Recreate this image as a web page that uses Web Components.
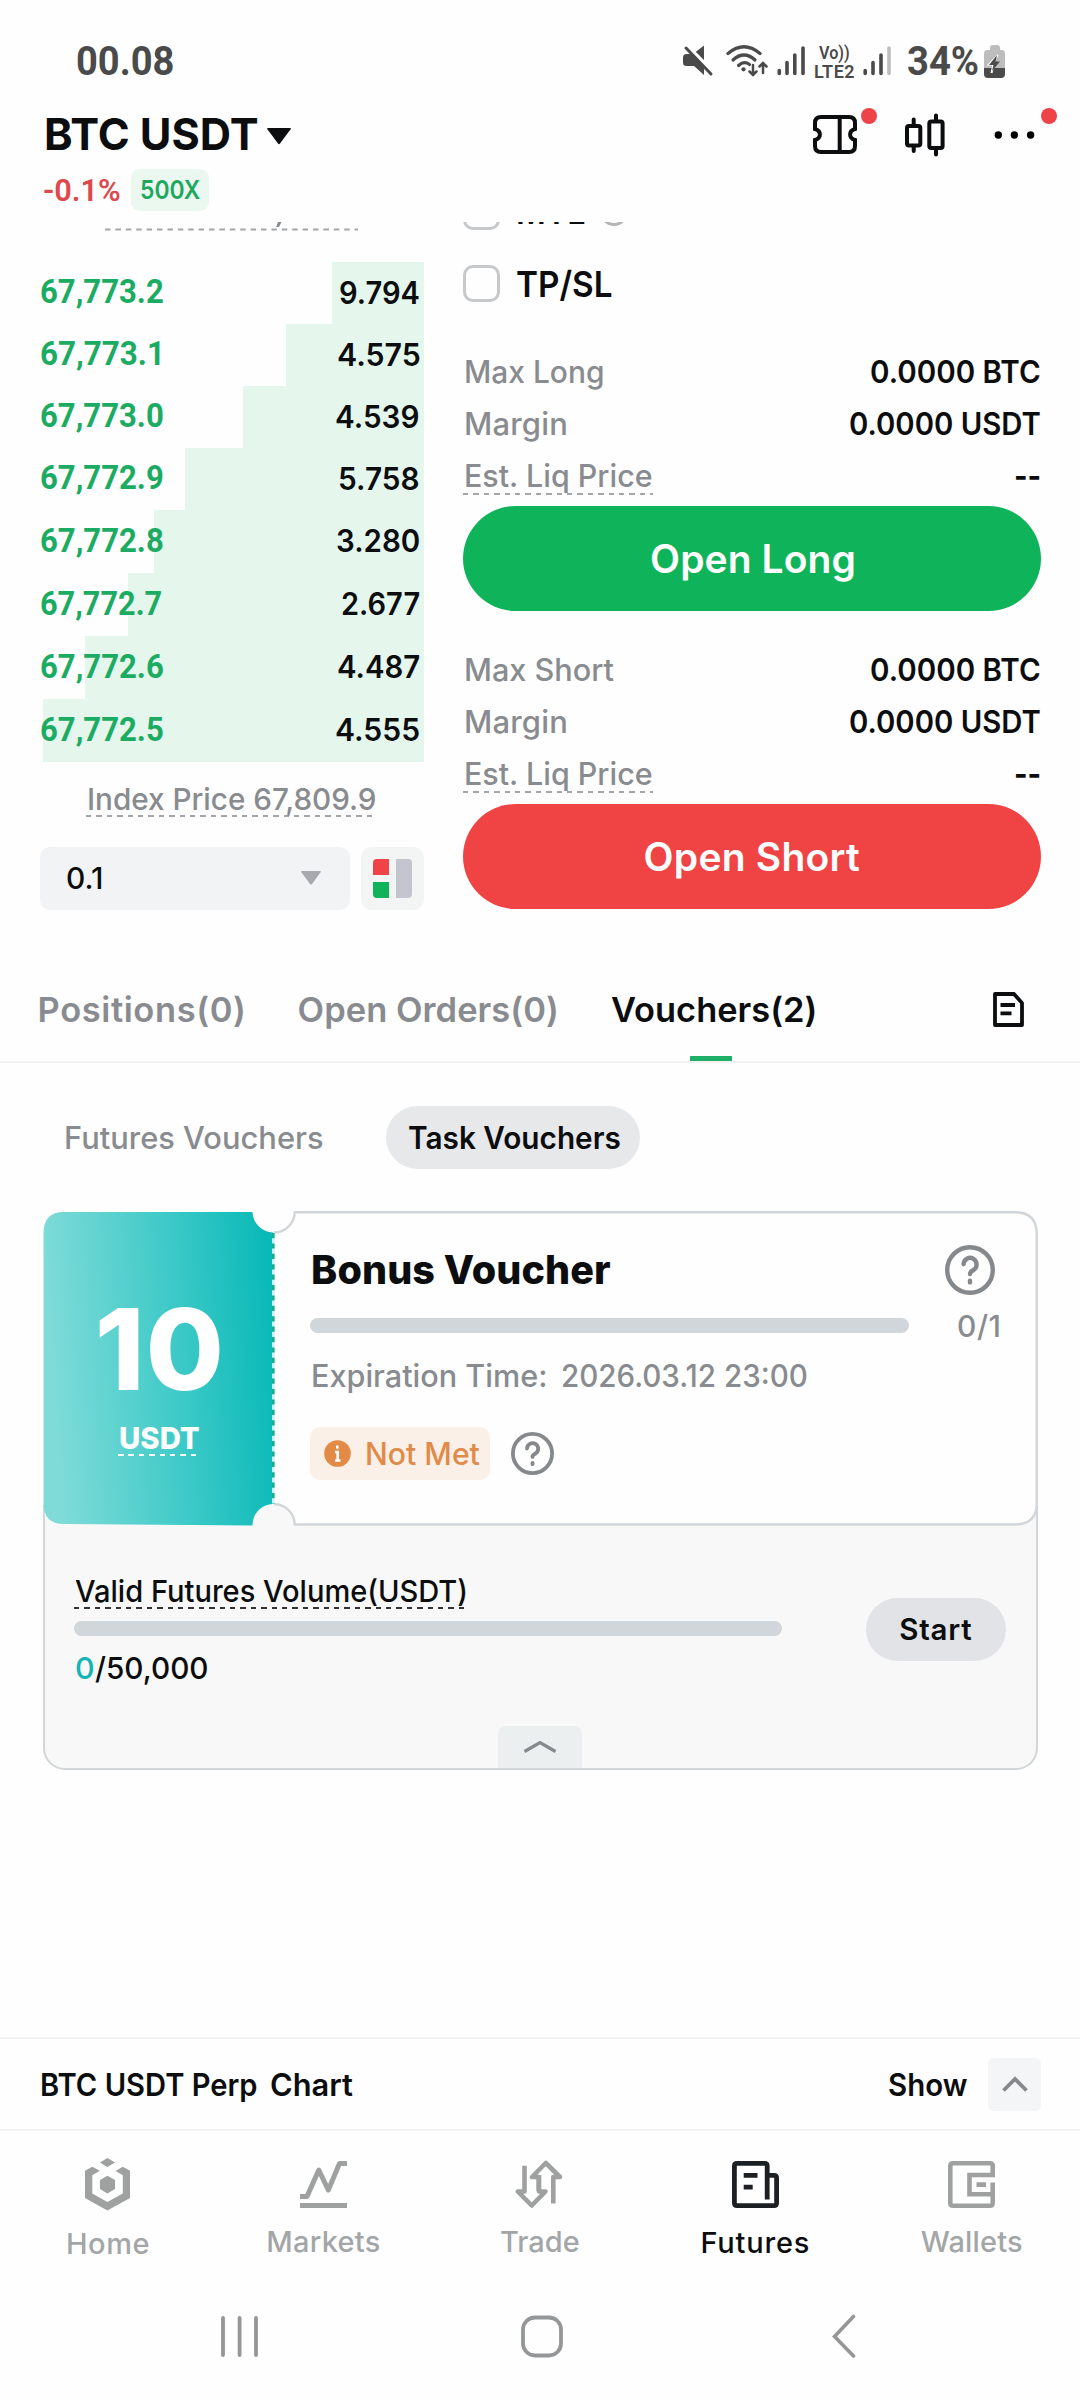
<!DOCTYPE html>
<html lang="en">
<head>
<meta charset="utf-8">
<title>BTC USDT Futures</title>
<style>
  html, body { margin: 0; padding: 0; background: #fefefe; }
  body { width: 1080px; height: 2400px; overflow: hidden; font-family: Inter, "Liberation Sans", sans-serif; color: #0b0d0f; }
</style>
</head>
<body>
<futures-page></futures-page>
<script>
const GREY = '#888b8f';
const define = (name, css, html) => customElements.define(name, class extends HTMLElement {
  constructor() {
    super();
    this.attachShadow({ mode: 'open' }).innerHTML =
      `<style>:host{display:block;box-sizing:border-box}*{box-sizing:border-box}svg{display:block;flex:none}.row{display:flex;align-items:center}${css}</style>${html}`;
  }
});

/* One line of text whose visible glyphs span exactly `w` pixels:
   loose text gets letter spacing, tight text is condensed. */
const pen = document.createElement('canvas').getContext('2d');
customElements.define('fit-text', class extends HTMLElement {
  connectedCallback() {
    const w = +this.getAttribute('w'), s = +this.getAttribute('s'), b = this.getAttribute('b') || '500';
    const f = this.getAttribute('f') || 'Inter', text = this.textContent;
    pen.font = `${b} ${s}px ${f}`;
    const m = pen.measureText(text);
    const ink = m.actualBoundingBoxLeft + m.actualBoundingBoxRight, goal = w - .6;
    let ls = 0, sx = 1;
    if (goal >= ink) ls = text.length > 1 ? (goal - ink) / (text.length - 1) : 0; else sx = goal / ink;
    const c = this.getAttribute('c'), lh = Math.round(s * 1.2);
    if (!this.shadowRoot) this.attachShadow({ mode: 'open' });
    this.shadowRoot.innerHTML = `<style>
      :host{display:block;flex:none;width:${w}px;height:${lh}px;font:${b} ${s}px/${lh}px ${f},"Liberation Sans",sans-serif;white-space:pre;${c ? `color:${c};` : ''}}
      span{display:block;width:max-content;margin-left:${m.actualBoundingBoxLeft * sx + .6}px;letter-spacing:${ls}px;transform:scaleX(${sx});transform-origin:0 50%}
    </style><span><slot></slot></span>`;
  }
});

/* Dashed underline below slotted text. */
define('dash-under', `:host{flex:none;--d:#a3a6a9;padding:0 2px;display:flex;align-items:center;
  background:repeating-linear-gradient(90deg,var(--d) 0 5.5px,transparent 5.5px 10.4px) left bottom/100% 2px no-repeat}`, `<slot></slot>`);

define('help-icon', `:host{flex:none;width:50px;height:50px}svg{width:100%;height:100%}`,
 `<svg viewBox="0 0 50 50" fill="none" stroke="#86898c" stroke-width="4.4" stroke-linecap="round"><circle cx="25" cy="25" r="22.8"/><path d="M18.6 19.2a6.5 6.5 0 1 1 9.8 5.8c-2.5 1.4-3.4 2-3.4 4"/><path d="M25 35.8v1.6"/></svg>`);

define('status-bar', `:host{height:95px;padding:24px 75px 0 76.5px;color:#4a4a4a}.row{height:71px}.sp{flex:1}.net{display:flex;flex-direction:column;margin:2px 9px 0 8px}.net fit-text{margin-bottom:-3.500px}`,
`<div class="row">
 <fit-text w="96.7" s="41" b="700" f="Roboto" style="margin-top:3px">00.08</fit-text><div class="sp"></div>
 <svg width="124" height="34" viewBox="682 43 124 34" fill="none" stroke="#4a4a4a" stroke-linecap="round">
  <path d="M683 57.500q0-3.500 3.500-3.500H693l11-8.500V75l-10-9h-7.500q-3.500 0-3.500-3.500z" fill="#4a4a4a" stroke="none"/>
  <path d="M687 46l26 26" stroke="#fefefe" stroke-width="4" stroke-linecap="butt"/><path d="M686 48l25 26" stroke-width="3"/>
  <g stroke-width="3.200"><path d="M728 53.500Q744 40 760 53.500"/><path d="M733 60Q744 50 755 60"/><path d="M738.500 65.500Q744 60.500 749.500 64.500"/></g>
  <circle cx="743.500" cy="69.300" r="2.100" fill="#4a4a4a" stroke="none"/>
  <path d="M753 65v10m-3.500-3.500L753 75l3.500-3.500M763 73V63m-3.500 3.500L763 63l3.500 3.500" stroke-width="2.500"/>
  <path d="M779.300 73.500v-3M787 73.500V62.500M794.800 73.500V55M803 73.500V48" stroke-width="3.600"/>
 </svg>
 <div class="net"><fit-text w="31" s="18" b="600" f="Roboto" style="margin-left:4px">Vo))</fit-text><fit-text w="40" s="18" b="600" f="Roboto">LTE2</fit-text></div>
 <svg width="28" height="34" viewBox="863 43 28 34" fill="none" stroke="#4a4a4a" stroke-width="3.600" stroke-linecap="round"><path d="M865.200 73.500v-3M873 73.500V62.500M881 73.500V55"/><path d="M889 73.500V48" stroke="#bdbdbd"/></svg>
 <fit-text w="70.500" s="41" b="700" f="Roboto" style="margin:3px 0 0 16.500px">34%</fit-text>
 <svg width="21" height="34" viewBox="984 43 21 34" style="margin:2px 0 0 5.700px"><path d="M990 47q0-3 3-3h4q3 0 3 3v2h2q3 0 3 4v14h-21V53q0-4 3-4h3z" fill="#bdbdbd"/><path d="M984 67h21v6q0 4-4 4h-13q-4 0-4-4z" fill="#4a4a4a"/><path d="M998 54l-9 9.500h4.500L991.500 72" stroke="#fefefe" stroke-width="2" fill="none"/><path d="M997 54l-8 10h4.500L992 70l8-9.500h-4.500z" fill="#4a4a4a"/></svg>
</div>`);

define('market-header', `:host{height:127px;padding:0 29px 0 45.8px}.top{height:79px}.sp{flex:1}.sub{height:32px;margin-left:-2.800px}.lev{margin-left:11.500px;width:78px;height:42px;border-radius:9px;background:#eaf8f0;display:flex;align-items:center;justify-content:center}
.dot{position:relative}.dot::after{content:"";position:absolute;width:16px;height:16px;border-radius:50%;background:#ee4347;top:-7px;right:-20.500px}.more.dot::after{top:-4.500px;right:-6.500px}`,
`<div class="row top">
 <fit-text w="212.500" s="44.500" b="750">BTC USDT</fit-text>
 <svg width="24" height="17" viewBox="0 0 24 17" style="margin:3px 0 0 9px"><path d="M1 0h22q1.500 0 .6 1.300L13 15.500q-1 1.300-2 0L.4 1.300Q-.5 0 1 0z" fill="#0b0d0f"/></svg>
 <div class="sp"></div>
 <div class="dot"><svg width="44" height="39" viewBox="0 0 44 39" fill="none" stroke="#0b0d0f" stroke-width="4"><path d="M8 2H36Q42 2 42 8V14C35.500 16 35.500 23 42 25V31Q42 37 36 37H8Q2 37 2 31V25C8.500 23 8.500 16 2 14V8Q2 2 8 2ZM26.700 2V37"/></svg></div>
 <svg width="40" height="44" viewBox="0 0 40 44" fill="none" stroke="#0b0d0f" stroke-width="4" stroke-linecap="round" style="margin:0 0 0 48px"><rect x="2" y="13" width="13.300" height="19.500" rx="2"/><rect x="24.300" y="8.500" width="13.300" height="26.500" rx="2"/><path d="M8.700 6.500V12M8.700 33v5M31 2.500V8M31 35.500V41.500"/></svg>
 <div class="dot more" style="margin-left:49.500px;margin-right:1px"><svg width="56" height="44" viewBox="994 112.500 56 44"><circle cx="998.300" cy="134.500" r="3.700"/><circle cx="1014.400" cy="134.500" r="3.700"/><circle cx="1030.600" cy="134.500" r="3.700"/></svg></div>
</div>
<div class="row sub"><fit-text w="76.500" s="31" b="600" f="Roboto" c="#dc4a4e">-0.1%</fit-text><div class="lev"><fit-text w="60" s="26.300" b="600" c="#1fa75f">500X</fit-text></div></div>`);

customElements.define('order-book', class extends HTMLElement {
  constructor() {
    super();
    const rows = [['67,773.2', 122.5, '9.794', 80, 92], ['67,773.1', 119, '4.575', 82, 138.5], ['67,773.0', 122.5, '4.539', 83.3, 181], ['67,772.9', 122.5, '5.758', 79.5, 239],
      ['67,772.8', 122.5, '3.280', 82.5, 270], ['67,772.7', 121, '2.677', 78, 296], ['67,772.6', 122.5, '4.487', 82, 339.3], ['67,772.5', 122.5, '4.555', 83.3, 381]];
    this.attachShadow({ mode: 'open' }).innerHTML = `<style>
      :host{display:block;width:384px}*{box-sizing:border-box}svg{display:block}
      .cut{height:40px}
      .lv{display:flex;align-items:center;justify-content:space-between;height:62px;padding:0 5px 2px .5px;background:linear-gradient(#e5f6ec,#e5f6ec) right/var(--w) 100% no-repeat}
      .lv:nth-child(n+7){height:63px}
      .idx{display:flex;justify-content:center;height:85px;padding:18px 1px 0 0}
      dash-under{height:37px}
      .ctl{display:flex;justify-content:space-between}
      .sel{width:310px;height:63px;border-radius:10px;background:#f2f3f5;display:flex;align-items:center;justify-content:space-between;padding:0 29px 1px 26.5px}
      .view{width:63px;height:63px;border-radius:11px;background:#f3f4f4;display:grid;place-items:center}
    </style>
    <svg class="cut" width="384" height="40" viewBox="0 0 384 40"><path d="M238 0H241.500L239 5H236.200z" fill="#888b8f"/><path d="M65 7.500H318" stroke="#a3a6a9" stroke-width="2" stroke-dasharray="5.500 4.900"/></svg>
    ${rows.map(r => `<div class="lv" style="--w:${r[4]}px"><fit-text w="${r[1]}" s="33" b="700" f="Roboto" c="#1cab62">${r[0]}</fit-text><fit-text w="${r[3]}" s="31" b="600">${r[2]}</fit-text></div>`).join('')}
    <div class="idx"><dash-under><fit-text w="287" s="30.500" b="550" c="${GREY}">Index Price 67,809.9</fit-text></dash-under></div>
    <div class="ctl"><div class="sel"><fit-text w="35.500" s="30" b="500">0.1</fit-text><svg width="20" height="14" viewBox="0 0 20 14"><path d="M1 0h18q1.500 0 .6 1.300L11 13q-1 1-2 0L.4 1.300Q-.5 0 1 0z" fill="#a6a9ae"/></svg></div>
    <div class="view"><svg width="39" height="39" viewBox="0 0 39 39"><path d="M4 0H16V16H0V4Q0 0 4 0z" fill="#ef4347"/><path d="M0 23H16V39H4Q0 39 0 35z" fill="#10b35a"/><path d="M23 0h12q4 0 4 4v31q0 4-4 4H23z" fill="#c3c6cf"/></svg></div></div>`;
  }
});

define('check-row', `:host{display:flex;align-items:center;height:37px}i{width:37px;height:37px;border:3.200px solid #c6c8ca;border-radius:10px;margin-right:16px;flex:none}`, `<i></i><slot></slot>`);
define('stat-row', `:host{display:flex;align-items:center;justify-content:space-between;height:52px;padding:0 1px 1px 0}::slotted(fit-text:first-child){margin-left:2.300px}::slotted(dash-under){height:39px}`, `<slot></slot>`);
define('pill-button', `:host{display:flex;align-items:center;justify-content:center;color:#fff;border-radius:60px}`, `<slot></slot>`);

define('order-form', `:host{width:578px}check-row:first-of-type{margin:-29px 0 35px}.g{padding-top:44px}.g2{padding-top:33px}pill-button{height:105px;margin-top:4px}svg{margin-left:15px}`,
`<check-row><fit-text w="67" s="36" b="600" style="margin-left:1.500px">MTL</fit-text><svg width="28" height="28" viewBox="0 0 28 28"><circle cx="14" cy="14" r="12.500" fill="none" stroke="#b3b5b7" stroke-width="3"/></svg></check-row>
<check-row><fit-text w="95" s="36" b="600" style="margin-top:2px">TP/SL</fit-text></check-row>
<div class="g"><stat-row><fit-text w="137" s="31" b="550" c="${GREY}">Max Long</fit-text><fit-text w="169.500" s="31" b="600">0.0000 BTC</fit-text></stat-row>
<stat-row><fit-text w="101" s="31" b="550" c="${GREY}">Margin</fit-text><fit-text w="191" s="31" b="600">0.0000 USDT</fit-text></stat-row>
<stat-row><dash-under><fit-text w="186.300" s="31" b="550" c="${GREY}">Est. Liq Price</fit-text></dash-under><fit-text w="24.500" s="31" b="700">--</fit-text></stat-row>
<pill-button style="background:#0fb45a"><fit-text w="203" s="39" b="600">Open Long</fit-text></pill-button></div>
<div class="g2"><stat-row><fit-text w="148" s="31" b="550" c="${GREY}">Max Short</fit-text><fit-text w="169.500" s="31" b="600">0.0000 BTC</fit-text></stat-row>
<stat-row><fit-text w="101" s="31" b="550" c="${GREY}">Margin</fit-text><fit-text w="191" s="31" b="600">0.0000 USDT</fit-text></stat-row>
<stat-row><dash-under><fit-text w="186.300" s="31" b="550" c="${GREY}">Est. Liq Price</fit-text></dash-under><fit-text w="24.500" s="31" b="700">--</fit-text></stat-row>
<pill-button style="background:#f04444"><fit-text w="216" s="39" b="600">Open Short</fit-text></pill-button></div>`);

define('trade-panel', `:host{display:flex;justify-content:space-between;height:730px;padding:0 39px 0 40px;overflow:hidden}`, `<order-book></order-book><order-form></order-form>`);

define('position-tabs', `:host{display:flex;align-items:center;height:111px;padding:5px 56px 0 39px;border-bottom:2px solid #f0f1f1;color:${GREY}}.on{position:relative;color:#0b0d0f;margin:0 auto 0 54px}.on::after{content:"";position:absolute;left:80px;width:42px;height:5px;top:67px;background:#1eae68}`,
`<fit-text w="204" s="34.500" b="600">Positions(0)</fit-text><fit-text w="258" s="34.500" b="600" style="margin-left:55px">Open Orders(0)</fit-text><div class="on"><fit-text w="204" s="34.500" b="600">Vouchers(2)</fit-text></div>
<svg width="31" height="35" viewBox="0 0 31 35" fill="none" stroke="#0b0d0f" stroke-width="3.800" stroke-linejoin="round"><path d="M2 2H21L29 11V33H2Z"/><path d="M7.500 13H22M7.500 21.300H18.500"/></svg>`);

define('voucher-filter', `:host{display:flex;align-items:center;height:63px;margin-top:43px;padding-left:65.400px}.on{width:254.500px;height:63px;margin-left:62.900px;border-radius:32px;background:#e7e8ea;display:flex;align-items:center;justify-content:center}`,
`<fit-text w="257.500" s="31" b="550" c="${GREY}">Futures Vouchers</fit-text><div class="on"><fit-text w="211.500" s="31" b="600" style="margin-left:2px">Task Vouchers</fit-text></div>`);

define('progress-track', `:host{height:15px;border-radius:8px;background:#d0d6d9;flex:none}`, ``);

define('voucher-ticket', `:host{position:relative;display:flex;height:315px}.bg{position:absolute;left:0;top:0}
.amt{position:relative;width:230px;padding-top:70px;display:flex;flex-direction:column;align-items:center;color:#fff}.amt dash-under{--d:#fff;height:36px;padding:0 0 0 1px;margin-left:2px}
.info{position:relative;flex:1;padding:0 38px 0 37.500px}.t{height:87px;padding:30px 5px 0 2.500px;justify-content:space-between}.t fit-text{margin-top:1px}.b{height:15px;margin-top:20px;justify-content:space-between}.e{height:37px;margin-top:24px;padding-left:2.300px;gap:17.500px}.s{margin-top:33px}
.tag{width:180px;height:53px;border-radius:10px;background:#fbf0e8;display:flex;align-items:center;padding:0 0 1px 13.500px;gap:16px;margin-right:21px}help-icon.sm{width:43px;height:43px}`,
`<svg class="bg" width="995" height="316" viewBox="0 0 995 316"><defs><linearGradient id="g" x1="0" y1=".1" x2="1" y2="0"><stop offset="0" stop-color="#7edbd8"/><stop offset=".55" stop-color="#3cc9c7"/><stop offset="1" stop-color="#05b8b6"/></linearGradient></defs>
<path d="M231 21.500A21 21 0 0 0 251.800 1.200H973Q993.500 1.200 993.500 22V292Q993.500 313.500 973 313.500H251.800A21 21 0 0 0 231 293z" fill="#fefefe"/>
<path d="M21 1H209.500A21 21 0 0 0 230 21.500V293A21 21 0 0 0 209.500 314.500L21 313Q.5 313 .5 292V22Q.5 1 21 1z" fill="url(#g)"/>
<path d="M231 21.500A21 21 0 0 0 251.800 1.200H972Q993.700 1.200 993.700 23V292Q993.700 313.500 972 313.500H251.800A21 21 0 0 0 231 293" fill="none" stroke="#d2d6d8" stroke-width="2.400"/>
<path d="M230.300 22V293" stroke="#cdeff2" stroke-width="2.600"/><path d="M230.300 22V293" stroke="#12b08f" stroke-width="2.600" stroke-dasharray="5.200 5.200"/></svg>
<div class="amt"><fit-text w="120.500" s="113" b="800" style="margin-left:4px">10</fit-text><dash-under style="margin-top:3px"><fit-text w="80" s="30" b="800">USDT</fit-text></dash-under></div>
<div class="info"><div class="row t"><fit-text w="297.500" s="39.500" b="800">Bonus Voucher</fit-text><help-icon></help-icon></div>
<div class="row b"><progress-track style="width:599px"></progress-track><fit-text w="42" s="30" b="450" c="${GREY}">0/1</fit-text></div>
<div class="row e"><fit-text w="232.700" s="31" b="450" c="${GREY}">Expiration Time:</fit-text><fit-text w="244.500" s="31" b="450" c="${GREY}">2026.03.12 23:00</fit-text></div>
<div class="row s"><div class="tag"><svg width="27" height="27" viewBox="0 0 27 27"><circle cx="13.500" cy="13.500" r="13.300" fill="#e38a46"/><path d="M13.300 5.500v3.300M11 12h2.700v8.500M11 20.500h5.500" stroke="#fff" stroke-width="2.600" fill="none"/></svg><fit-text w="113" s="31" b="550" c="#e08b49" style="margin-left:-.6px">Not Met</fit-text></div><help-icon class="sm"></help-icon></div></div>`);

define('voucher-task', `:host{margin-top:-21px;height:265px;border:2.400px solid #d2d6d8;border-top:0;border-radius:0 0 22px 22px;background:#f8f8f8;padding:66.500px 30px 0 29.500px;display:flex;flex-direction:column;justify-content:space-between}
.m{justify-content:space-between;align-items:flex-start}.l dash-under{--d:#333;width:394px;height:37px;padding:0}.l progress-track{width:708px;margin:12.500px 0 13px}.go{width:140px;height:63px;margin-top:26.500px;background:#e1e3e6;border-radius:32px;display:flex;align-items:center;justify-content:center}
.v{gap:1px;padding-left:1.500px}.tg{align-self:center;width:84px;height:42px;border-radius:7px 7px 0 0;background:#eceff0;display:grid;place-items:center;padding-bottom:2px}`,
`<div class="row m"><div class="l"><dash-under><fit-text w="391.500" s="30.500" b="450">Valid Futures Volume(USDT)</fit-text></dash-under><progress-track></progress-track><div class="row v"><fit-text w="17.500" s="30.500" b="450" c="#12b5b5">0</fit-text><fit-text w="112.500" s="30.500" b="450">/50,000</fit-text></div></div>
<div class="go"><fit-text w="71.500" s="29.500" b="600">Start</fit-text></div></div>
<div class="tg"><svg width="34" height="13" viewBox="0 0 34 13" fill="none" stroke="#86898b" stroke-width="3.200"><path d="M1.500 11.500L17 2.500L32.500 11.500"/></svg></div>`);

define('voucher-card', `:host{margin:42px 42.500px 0 42.500px}voucher-ticket{z-index:1}`, `<voucher-ticket></voucher-ticket><voucher-task></voucher-task>`);

define('chart-bar', `:host{display:flex;align-items:center;height:94px;margin-top:auto;padding:0 39px 0 41px;border:solid #f0f1f1;border-width:2px 0}.x{margin-left:auto;display:flex;align-items:center;gap:21px}.bx{width:53px;height:53px;border-radius:6px;background:#f3f5f6;display:grid;place-items:center}`,
`<fit-text w="215" s="31" b="600">BTC USDT Perp</fit-text><fit-text w="82.500" s="31" b="600" style="margin-left:14.500px">Chart</fit-text><div class="x"><fit-text w="79" s="31" b="600">Show</fit-text><div class="bx"><svg width="26" height="16" viewBox="0 0 26 16" fill="none" stroke="#86898b" stroke-width="3.800"><path d="M1.500 14.500L13 3L24.500 14.500"/></svg></div></div>`);

define('nav-item', `:host{flex:1;display:flex;flex-direction:column;align-items:center;color:#a3a6a8}::slotted(svg){display:block;margin-bottom:15px}`, `<slot></slot>`);
define('bottom-nav', `:host{display:flex;height:157px;padding:27px 1px 0 0}svg{overflow:visible}`,
`<nav-item><svg width="45" height="53" viewBox="0 0 45 53" fill="#9fa1a1" style="margin-bottom:15px"><path d="M22.400 0L30 4.500L22.400 9L15 4.500zM0 12.700L7.300 8.700L14.800 12.800L7.300 17.300V35.500L22.400 44L37.800 35.500V17.300L30.600 13L37.800 8.700L45 12.700V40L22.400 52.500L0 40zM22.400 17.800L30 22V31L22.400 35.500L15 31V22z"/></svg><fit-text w="81" s="29" b="450">Home</fit-text></nav-item>
<nav-item><svg width="47" height="51" viewBox="0 -3 47 51" fill="none" stroke="#9fa1a1" stroke-width="5" stroke-linejoin="round"><path d="M0 35.500H7L18.800 9L28.300 29L39.500 2.500H47M0 44.500H47"/></svg><fit-text w="112" s="29" b="450">Markets</fit-text></nav-item>
<nav-item><svg width="48" height="51" viewBox="0 -2 48 51" fill="none" stroke="#9fa1a1" stroke-width="4.600" stroke-linejoin="round"><path d="M9.500 5.700V31.500H2.800L16.700 45.500L30.500 31.500H24V15"/><path d="M38.300 43.500V17H45L30.800 3L17 17H23.700V31"/></svg><fit-text w="78.300" s="29" b="450">Trade</fit-text></nav-item>
<nav-item style="color:#0b0d0f"><svg width="47" height="52" viewBox="0 -3 47 52" fill="none" stroke="#1d2022" stroke-width="4.800"><path d="M35.200 38.500V5Q35.200 2.400 32.600 2.400H5Q2.400 2.400 2.400 5V42Q2.400 44.600 5 44.600H42Q44.600 44.600 44.600 42V17Q44.600 14.300 42 14.300H35.200M11.700 14.300H25.500M11.700 26.200H20.700"/></svg><fit-text w="107" s="29" b="450">Futures</fit-text></nav-item>
<nav-item><svg width="47" height="51" viewBox="0 -3 47 51" fill="none" stroke="#9fa1a1" stroke-width="4.600"><path d="M44.700 16.200V5Q44.700 2.300 42 2.300H5Q2.300 2.300 2.300 5V42Q2.300 44.700 5 44.700H42Q44.700 44.700 44.700 42V21.500M44.700 14H21.500V33.200H44.700M28.500 23.600H38"/></svg><fit-text w="102" s="29" b="450">Wallets</fit-text></nav-item>`);

define('system-nav', `:host{display:flex;justify-content:space-between;height:112px;padding:26px 224px 0 221px;}`,
`<svg width="37" height="44" viewBox="0 0 37 44" stroke="#949697" stroke-width="3.800" stroke-linecap="round"><path d="M2 4V41M18.600 4V41M35 4V41"/></svg>
<svg width="42" height="44" viewBox="0 0 42 44" fill="none" stroke="#949697" stroke-width="3.800" style="margin-right:7px"><rect x="2" y="3.500" width="38" height="38" rx="12"/></svg>
<svg width="24" height="44" viewBox="0 0 24 44" fill="none" stroke="#949697" stroke-width="3.600" stroke-linecap="round"><path d="M21.500 2.500L2.500 22.500L21.500 42"/></svg>`);

define('futures-page', `:host{display:flex;flex-direction:column;width:1080px;height:2400px;background:#fefefe}status-bar,market-header,trade-panel,position-tabs,voucher-filter,voucher-card,chart-bar,bottom-nav,system-nav{flex:none}`,
`<status-bar></status-bar><market-header></market-header><trade-panel></trade-panel><position-tabs></position-tabs><voucher-filter></voucher-filter><voucher-card></voucher-card><chart-bar></chart-bar><bottom-nav></bottom-nav><system-nav></system-nav>`);
</script>
</body>
</html>
